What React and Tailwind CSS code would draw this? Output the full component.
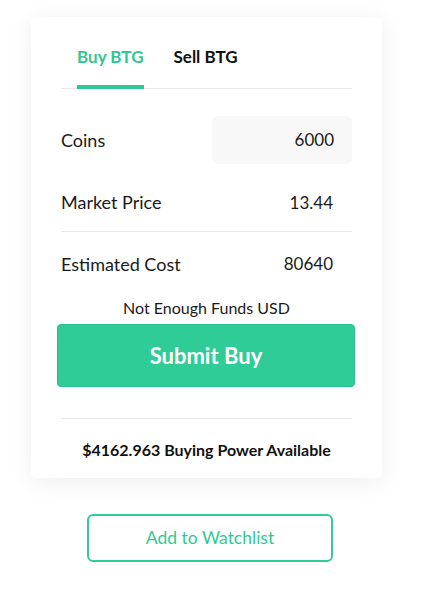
import React, { useState } from 'react';

const App = () => {
  const [tab, setTab] = useState('buy');

  return (
    <div className="min-h-[612px] w-[432px] bg-white font-['Lato','Noto_Sans',sans-serif] text-[#1a1a1a]">
      <div className="pt-[17px] pl-[31px]">
        {/* Card */}
        <div className="w-[351px] h-[461px] bg-white rounded-[5px] shadow-[0_4px_24px_rgba(0,0,0,0.07)] px-[30px] pt-[30px]">
          {/* Tabs */}
          <div className="flex gap-[30px] pl-[16px] border-b border-[#e8e8e8]">
            <button
              onClick={() => setTab('buy')}
              className={`leading-[20px] pb-[18px] text-[17px] font-bold border-b-[4px] -mb-px ${tab === 'buy' ? 'text-[#30c793] border-[#30c793]' : 'text-[#111] border-transparent'}`}
            >
              Buy BTG
            </button>
            <button
              onClick={() => setTab('sell')}
              className={`leading-[20px] pb-[18px] text-[17px] font-bold border-b-[4px] -mb-px ${tab === 'sell' ? 'text-[#30c793] border-[#30c793]' : 'text-[#111] border-transparent'}`}
            >
              Sell BTG
            </button>
          </div>

          {/* Rows */}
          <div className="flex items-center justify-between mt-[27px]">
            <span className="text-[18px]">Coins</span>
            <div className="w-[140px] h-[48px] bg-[#f8f8f8] rounded-[5px] flex items-center justify-end pr-[18px] text-[17px]">
              6000
            </div>
          </div>
          <div className="flex items-center justify-between h-[68px] pt-[10px] pr-[19px] border-b border-[#e8e8e8]">
            <span className="text-[18px]">Market Price</span>
            <span className="text-[17px]">13.44</span>
          </div>
          <div className="flex items-center justify-between h-[64px] pr-[19px]">
            <span className="text-[18px]">Estimated Cost</span>
            <span className="text-[17px]">80640</span>
          </div>

          <p className="text-center text-[16px] leading-[18px] mt-[3px]">Not Enough Funds USD</p>

          <button className="mt-[7px] -mx-[4px] w-[298px] h-[63px] bg-[#30cc98] border border-[#27c08b] rounded-[4px] text-white text-[22px] font-bold">
            Submit Buy
          </button>

          <div className="mt-[31px] border-t border-[#e8e8e8] h-[59px] pt-[3px] flex items-center justify-center">
            <span className="text-[16px] font-bold text-[#111]">$4162.963 Buying Power Available</span>
          </div>
        </div>
      </div>

      {/* Watchlist */}
      <div className="flex pl-[87px] mt-[36px]">
        <button className="w-[246px] h-[48px] border-2 border-[#30cc98] rounded-[6px] text-[#2ec993] text-[17.5px] font-normal">
          Add to Watchlist
        </button>
      </div>
    </div>
  );
};

export default App;
